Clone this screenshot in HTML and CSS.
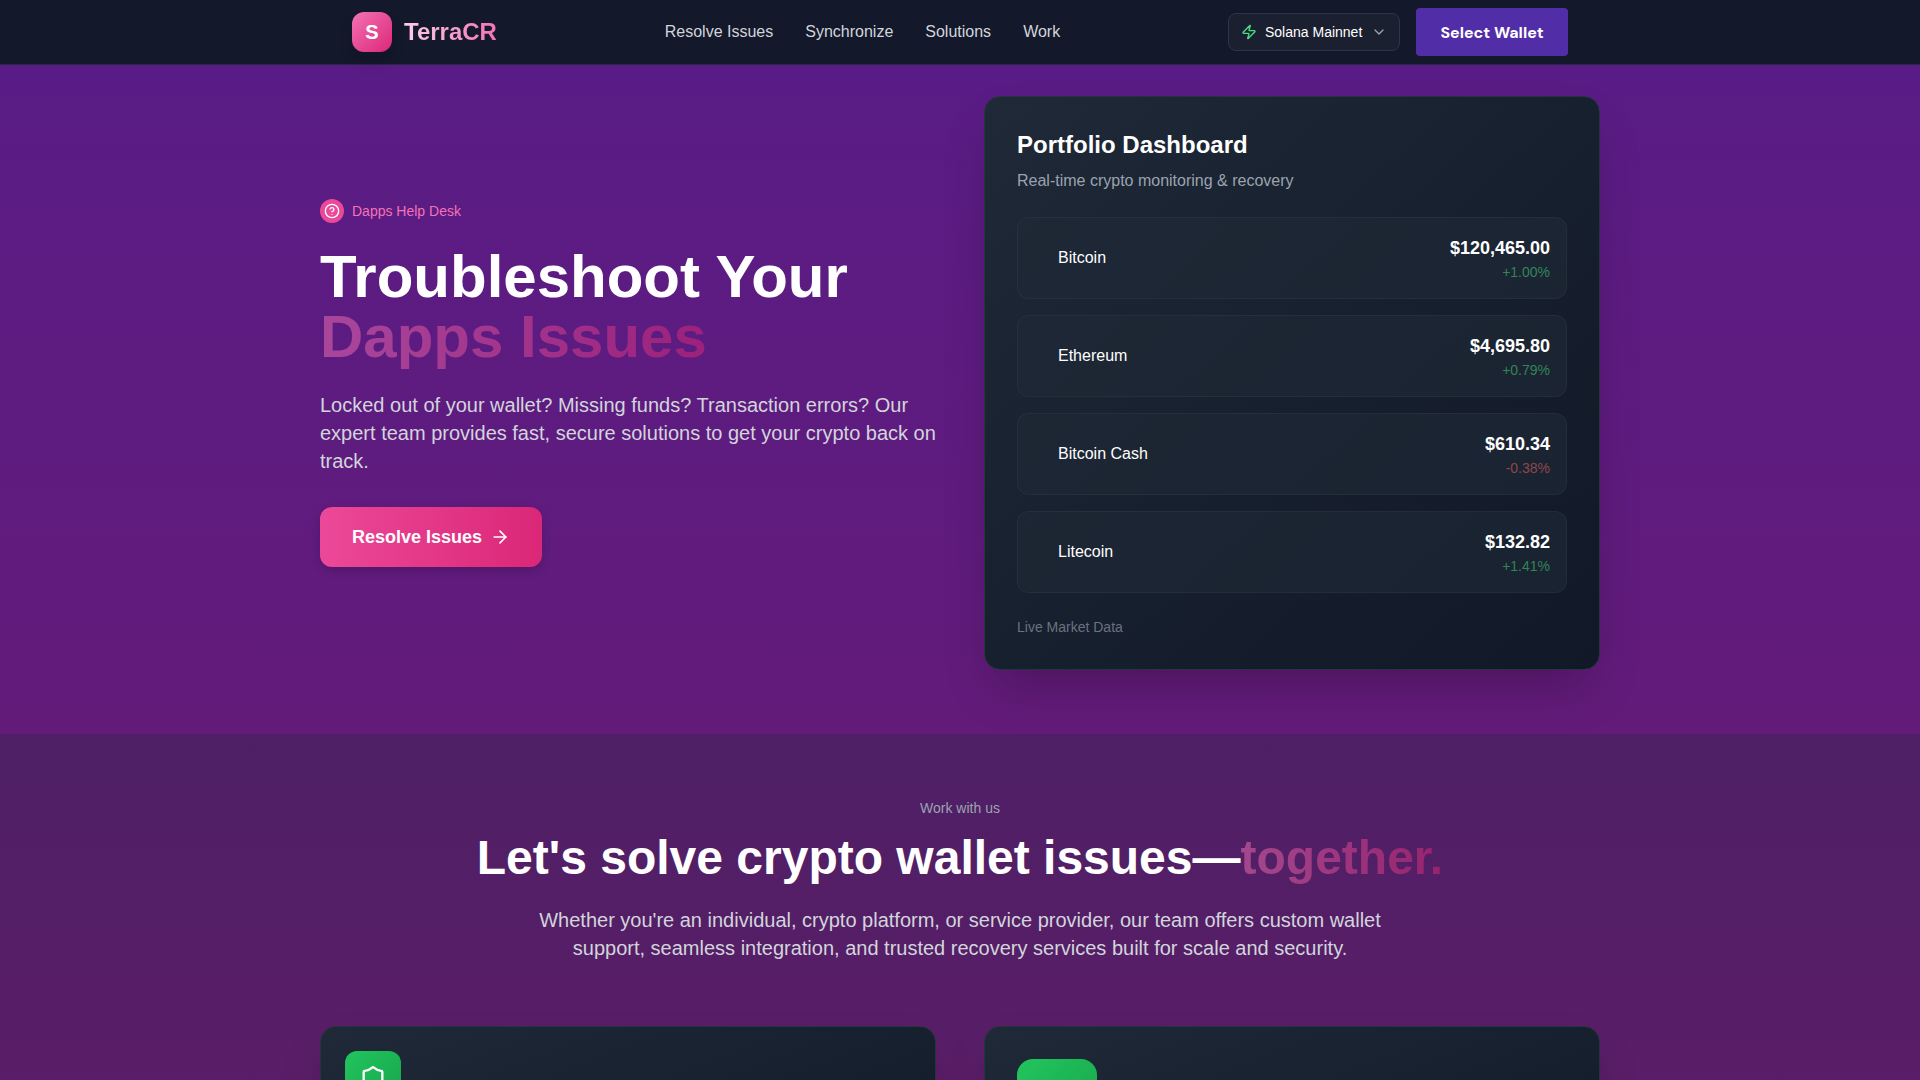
FILE: index.html
```html
<!DOCTYPE html>
<html lang="en">
<head>
    <meta charset="UTF-8">
    <meta name="viewport" content="width=device-width, initial-scale=1.0">
    <title>TerraCR</title>
    <link rel="stylesheet" href="styles.css">
</head>
<body>
  <!-- Header -->
  <header class="header">
    <div class="header-inner">
      <a class="logo" href="#">
        <span class="logo-mark">S</span>
        <span class="logo-text">TerraCR</span>
      </a>

      <nav class="nav">
        <a href="#resolve">Resolve Issues</a>
        <a href="#synchronize">Synchronize</a>
        <a href="#solutions">Solutions</a>
        <a href="#work">Work</a>
      </nav>

      <div class="header-actions">
        <div class="network">
          <svg class="icon-zap" viewBox="0 0 24 24" aria-hidden="true"><path d="M4 14a1 1 0 0 1-.78-1.63l9.9-10.2a.5.5 0 0 1 .86.46l-1.92 6.02A1 1 0 0 0 13 10h7a1 1 0 0 1 .78 1.63l-9.9 10.2a.5.5 0 0 1-.86-.46l1.92-6.02A1 1 0 0 0 11 14z"/></svg>
          <select class="network-select" id="network" aria-label="Network">
            <option>Solana Mainnet</option>
          </select>
          <svg class="icon-chevron" viewBox="0 0 24 24" aria-hidden="true"><path d="m6 9 6 6 6-6"/></svg>
        </div>
        <button class="wallet-btn" type="button">Select Wallet</button>
      </div>
    </div>
  </header>

  <main>
    <!-- Hero -->
    <section class="hero" id="resolve">
      <div class="container grid">
        <div class="hero-content">
          <div class="badge">
            <span class="badge-icon">
              <svg viewBox="0 0 24 24" aria-hidden="true"><circle cx="12" cy="12" r="10"/><path d="M9.09 9a3 3 0 0 1 5.83 1c0 2-3 3-3 3"/><path d="M12 17h.01"/></svg>
            </span>
            <span>Dapps Help Desk</span>
          </div>
          <h1>Troubleshoot Your<br><span class="gradient-text">Dapps Issues</span></h1>
          <p class="lead">Locked out of your wallet? Missing funds? Transaction errors? Our expert team provides fast, secure solutions to get your crypto back on track.</p>
          <button class="cta" type="button">
            Resolve Issues
            <svg viewBox="0 0 24 24" aria-hidden="true"><path d="M5 12h14"/><path d="m12 5 7 7-7 7"/></svg>
          </button>
        </div>

        <!-- Portfolio -->
        <div class="card portfolio">
          <h2>Portfolio Dashboard</h2>
          <p class="portfolio-sub">Real-time crypto monitoring &amp; recovery</p>
          <ul class="coins">
            <li class="coin">
              <span class="coin-name">Bitcoin</span>
              <div class="coin-value">
                <div class="price">$120,465.00</div>
                <div class="change up">+1.00%</div>
              </div>
            </li>
            <li class="coin">
              <span class="coin-name">Ethereum</span>
              <div class="coin-value">
                <div class="price">$4,695.80</div>
                <div class="change up">+0.79%</div>
              </div>
            </li>
            <li class="coin">
              <span class="coin-name">Bitcoin Cash</span>
              <div class="coin-value">
                <div class="price">$610.34</div>
                <div class="change down">-0.38%</div>
              </div>
            </li>
            <li class="coin">
              <span class="coin-name">Litecoin</span>
              <div class="coin-value">
                <div class="price">$132.82</div>
                <div class="change up">+1.41%</div>
              </div>
            </li>
          </ul>
          <p class="live">Live Market Data</p>
        </div>
      </div>
    </section>

    <!-- Work with us -->
    <section class="work" id="work">
      <div class="container">
        <div class="work-intro">
          <p class="eyebrow">Work with us</p>
          <h2>Let's solve crypto wallet issues—<span class="gradient-text">together.</span></h2>
          <p class="lead">Whether you're an individual, crypto platform, or service provider, our team offers custom wallet support, seamless integration, and trusted recovery services built for scale and security.</p>
        </div>
        <div class="grid">
          <div class="card service">
            <div class="service-icon">
              <svg viewBox="0 0 24 24" aria-hidden="true"><path d="M20 13c0 5-3.5 7.5-7.66 8.95a1 1 0 0 1-.67-.01C7.5 20.5 4 18 4 13V6a1 1 0 0 1 1-1c2 0 4.5-1.2 6.24-2.72a1.17 1.17 0 0 1 1.52 0C14.51 3.81 17 5 19 5a1 1 0 0 1 1 1z"/></svg>
            </div>
          </div>
          <div class="card service service-large">
            <div class="service-icon"></div>
          </div>
        </div>
      </div>
    </section>
  </main>
</body>
</html>
```

FILE: styles.css
```css
* {
    box-sizing: border-box;
}

body {
    margin: 0;
    font-family: "Liberation Sans", Arial, sans-serif;
    font-size: 16px;
    line-height: 24px;
    color: #ffffff;
    background: linear-gradient(to bottom, #581c87, #701a6a 1600px);
}

h1, h2, p, ul {
    margin: 0;
    padding: 0;
}

a {
    color: inherit;
    text-decoration: none;
}

button {
    font-family: inherit;
    color: #ffffff;
    border: none;
    cursor: pointer;
}

svg {
    fill: none;
    stroke: currentColor;
    stroke-width: 2;
    stroke-linecap: round;
    stroke-linejoin: round;
    flex-shrink: 0;
}

.container, .header-inner {
    max-width: 1280px;
    margin: 0 auto;
}

.grid {
    display: grid;
    grid-template-columns: 1fr 1fr;
    gap: 48px;
}

/* Header */
.header {
    background-color: #13182a;
    border-bottom: 1px solid #272c3b;
}

.header-inner {
    display: flex;
    justify-content: space-between;
    align-items: center;
    height: 64px;
    padding: 0 32px;
}

.logo {
    display: flex;
    align-items: center;
    gap: 12px;
}

.logo-mark {
    display: flex;
    justify-content: center;
    align-items: center;
    width: 40px;
    height: 40px;
    border-radius: 12px;
    font-size: 20px;
    font-weight: bold;
    background: linear-gradient(to bottom right, #f472b6, #db2777);
    box-shadow: 0 10px 15px rgba(0, 0, 0, 0.1);
}

.logo-text {
    font-size: 24px;
    line-height: 32px;
    font-weight: bold;
    color: transparent;
    background: linear-gradient(to right, #fbcfe8, #f472b6);
    background-clip: text;
}

.nav {
    display: flex;
    gap: 32px;
    color: #d1d5db;
}

.header-actions {
    display: flex;
    align-items: center;
    gap: 16px;
}

.network {
    display: flex;
    align-items: center;
    gap: 8px;
    padding: 8px 12px;
    border: 1px solid #303544;
    border-radius: 8px;
    background-color: #1b2030;
}

.network svg {
    width: 16px;
    height: 16px;
}

.network-select {
    appearance: none;
    padding: 0;
    border: none;
    font-family: inherit;
    font-size: 14px;
    line-height: 20px;
    color: #ffffff;
    background: transparent;
}

.icon-zap {
    color: #4ade80;
}

.icon-chevron {
    color: #9ca3af;
}

.wallet-btn {
    height: 48px;
    min-width: 152px;
    padding: 0 20px;
    border-radius: 4px;
    font-family: "DM Sans", Inter, sans-serif;
    font-size: 16px;
    font-weight: 700;
    background-color: #512da8;
}

/* Hero */
.hero {
    padding: 31px 0 64px;
}

.hero .grid {
    align-items: center;
}

.badge {
    display: flex;
    align-items: center;
    gap: 8px;
    margin-bottom: 24px;
    font-size: 14px;
    color: #f472b6;
}

.badge-icon {
    display: flex;
    justify-content: center;
    align-items: center;
    width: 24px;
    height: 24px;
    border-radius: 50%;
    color: #ffffff;
    background-color: #ec4899;
}

.badge-icon svg {
    width: 16px;
    height: 16px;
}

h1 {
    margin-bottom: 24px;
    font-size: 60px;
    line-height: 60px;
}

.gradient-text {
    color: transparent;
    background: linear-gradient(to right, #f472b6, #db2777);
    background-clip: text;
    opacity: 0.5;
}

.lead {
    font-size: 20px;
    line-height: 28px;
    color: #d1d5db;
}

.cta {
    display: inline-flex;
    align-items: center;
    gap: 8px;
    margin-top: 32px;
    padding: 16px 32px;
    border-radius: 12px;
    font-size: 18px;
    line-height: 28px;
    font-weight: bold;
    background: linear-gradient(to right, #ec4899, #db2777);
    box-shadow: 0 4px 10px rgba(0, 0, 0, 0.15);
}

.cta svg {
    width: 20px;
    height: 20px;
}

/* Cards */
.card {
    border: 1px solid #24363c;
    border-radius: 16px;
    background: linear-gradient(to bottom right, #1f2937, #17202e 50%, #111827);
    box-shadow: 0 25px 50px -12px rgba(0, 0, 0, 0.25);
}

.portfolio {
    padding: 32px;
}

.portfolio h2 {
    margin-bottom: 8px;
    font-size: 24px;
    line-height: 32px;
}

.portfolio-sub {
    margin-bottom: 24px;
    color: #9ca3af;
}

.coins {
    display: grid;
    gap: 16px;
    list-style: none;
}

.coin {
    display: flex;
    justify-content: space-between;
    align-items: center;
    padding: 16px 16px 16px 40px;
    border: 1px solid rgba(55, 65, 81, 0.3);
    border-radius: 12px;
    background-color: rgba(31, 41, 55, 0.6);
}

.coin-value {
    text-align: right;
}

.price {
    font-size: 18px;
    line-height: 28px;
    font-weight: bold;
}

.change {
    font-size: 14px;
    line-height: 20px;
}

.up {
    color: #318556;
}

.down {
    color: #8f464e;
}

.live {
    margin-top: 24px;
    font-size: 14px;
    line-height: 20px;
    color: #6b7280;
}

/* Work with us */
.work {
    padding: 64px 0;
    background: linear-gradient(to bottom, rgba(31, 41, 55, 0.3), rgba(31, 41, 55, 0.12));
}

.work-intro {
    max-width: 1024px;
    margin: 0 auto 64px;
    text-align: center;
}

.work-intro .lead {
    max-width: 896px;
    margin: 0 auto;
}

.eyebrow {
    margin-bottom: 16px;
    font-size: 14px;
    line-height: 20px;
    color: #9ca3af;
}

.work-intro h2 {
    margin-bottom: 24px;
    font-size: 48px;
    line-height: 48px;
}

.service {
    min-height: 240px;
    padding: 24px;
}

.service-icon {
    display: flex;
    justify-content: center;
    align-items: center;
    width: 56px;
    height: 56px;
    border-radius: 12px;
    background: linear-gradient(to bottom right, #22c55e, #16a34a);
}

.service-icon svg {
    width: 28px;
    height: 28px;
}

.service-large {
    padding: 32px;
}

.service-large .service-icon {
    width: 80px;
    height: 80px;
    border-radius: 16px;
}
```
